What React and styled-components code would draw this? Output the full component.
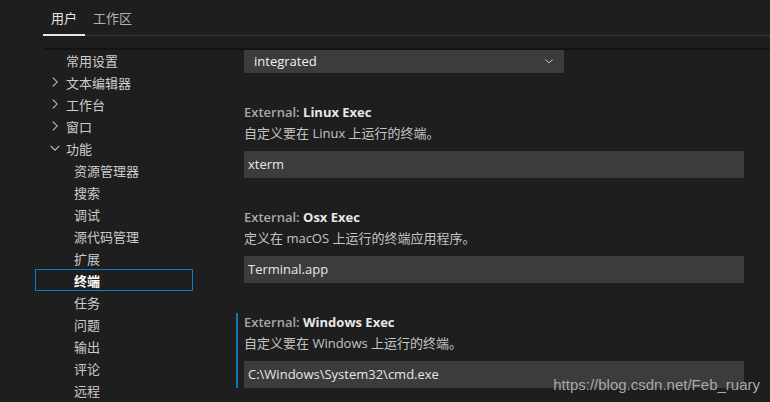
import styled, { createGlobalStyle } from 'styled-components'

const Global = createGlobalStyle`
    html, body {
        margin: 0;
        padding: 0;
        background: #1e1e1e;
    }
    * {
        box-sizing: border-box;
    }
`

const Page = styled.div`
    width: 770px;
    height: 402px;
    overflow: hidden;
    position: relative;
    background: #1e1e1e;
    color: #cccccc;
    font-family: "Open Sans", "Noto Sans CJK SC", sans-serif;
    font-size: 13px;
`

const TabBar = styled.div`
    display: flex;
    height: 36px;
    margin-left: 43px;
    border-bottom: 1px solid #3a3a3a;
`

const Tab = styled.div`
    padding: 10px 8px 0;
    height: 36px;
    line-height: 16px;
    color: ${({ $active }) => ($active ? '#e7e7e7' : '#b4b4b4')};
    border-bottom: 2px solid ${({ $active }) => ($active ? '#e7e7e7' : 'transparent')};
    margin-bottom: -1px;
`

const Shadow = styled.div`
    height: 14px;
    margin-left: 43px;
    border-bottom: 2px solid #141414;
`

const Body = styled.div`
    display: flex;
    padding-left: 35px;
    margin-top: -1px;
`

const Tree = styled.div`
    width: 158px;
    flex-shrink: 0;
`

const TreeRow = styled.div`
    display: flex;
    align-items: center;
    height: 22px;
    padding-left: ${({ $level }) => ($level === 2 ? 38 : 12)}px;
    border: 1px solid ${({ $selected }) => ($selected ? '#0a7fd0' : 'transparent')};
    color: ${({ $selected }) => ($selected ? '#ffffff' : '#cccccc')};
    font-weight: ${({ $selected }) => ($selected ? 700 : 400)};
    white-space: nowrap;
`

const Twistie = styled.span`
    width: 18px;
    display: flex;
    align-items: center;
    svg {
        width: 14px;
        height: 14px;
    }
`

const Settings = styled.div`
    margin-left: 43px;
    width: 508px;
    padding-top: 1px;
`

const SelectBox = styled.div`
    width: 320px;
    height: 23px;
    margin-left: 8px;
    background: #3c3c3c;
    display: flex;
    align-items: center;
    justify-content: space-between;
    padding: 0 9px 1px 10px;
    color: #f0f0f0;
    svg {
        width: 12px;
        height: 12px;
    }
`

const Item = styled.div`
    margin-top: 32px;
    padding-left: 6px;
    border-left: 2px solid ${({ $focused }) => ($focused ? '#0c7aab' : 'transparent')};
`

const Title = styled.div`
    line-height: 18px;
    margin-top: -2px;
    font-weight: 700;
    color: #e8e8e8;
    span {
        color: #a8a8a8;
        font-weight: 600;
    }
`

const Desc = styled.div`
    line-height: 18px;
    margin-top: 3px;
    color: #c4c4c4;
`

const Input = styled.div`
    margin-top: 9px;
    height: 27px;
    width: 500px;
    background: #3c3c3c;
    display: flex;
    align-items: center;
    padding: 0 4px 1px;
    color: #e6e6e6;
`

const Watermark = styled.div`
    position: absolute;
    right: 10px;
    bottom: 9px;
    font-family: "Liberation Sans", Arial, sans-serif;
    font-size: 15px;
    color: #a9a9a9;
`

const Chevron = ({ open }) => (
    <svg viewBox="0 0 16 16" fill="none" stroke="#c5c5c5" strokeWidth="1.2">
        {open ? <path d="M3 5.5 8 10.5l5-5" /> : <path d="M5.5 3 10.5 8l-5 5" />}
    </svg>
)

const treeItems = [
    { label: '常用设置', level: 1 },
    { label: '文本编辑器', level: 1, twistie: 'closed' },
    { label: '工作台', level: 1, twistie: 'closed' },
    { label: '窗口', level: 1, twistie: 'closed' },
    { label: '功能', level: 1, twistie: 'open' },
    { label: '资源管理器', level: 2 },
    { label: '搜索', level: 2 },
    { label: '调试', level: 2 },
    { label: '源代码管理', level: 2 },
    { label: '扩展', level: 2 },
    { label: '终端', level: 2, selected: true },
    { label: '任务', level: 2 },
    { label: '问题', level: 2 },
    { label: '输出', level: 2 },
    { label: '评论', level: 2 },
    { label: '远程', level: 2 },
]

const settings = [
    { name: 'Linux Exec', desc: '自定义要在 Linux 上运行的终端。', value: 'xterm' },
    { name: 'Osx Exec', desc: '定义在 macOS 上运行的终端应用程序。', value: 'Terminal.app' },
    { name: 'Windows Exec', desc: '自定义要在 Windows 上运行的终端。', value: 'C:\\Windows\\System32\\cmd.exe', focused: true },
]

const App = () => {
    return (
        <Page>
            <Global />
            <TabBar>
                <Tab $active>用户</Tab>
                <Tab>工作区</Tab>
            </TabBar>
            <Shadow />
            <Body>
                <Tree>
                    {treeItems.map((item) => (
                        <TreeRow key={item.label} $level={item.level} $selected={item.selected}>
                            {item.level === 1 && (
                                <Twistie>{item.twistie && <Chevron open={item.twistie === 'open'} />}</Twistie>
                            )}
                            {item.label}
                        </TreeRow>
                    ))}
                </Tree>
                <Settings>
                    <SelectBox>
                        integrated
                        <svg viewBox="0 0 16 16" fill="none" stroke="#c5c5c5" strokeWidth="1.3">
                            <path d="M3 6l5 4.5L13 6" />
                        </svg>
                    </SelectBox>
                    {settings.map((s) => (
                        <Item key={s.name} $focused={s.focused}>
                            <Title>
                                <span>External: </span>
                                {s.name}
                            </Title>
                            <Desc>{s.desc}</Desc>
                            <Input>{s.value}</Input>
                        </Item>
                    ))}
                </Settings>
            </Body>
            <Watermark>https://blog.csdn.net/Feb_ruary</Watermark>
        </Page>
    )
}

export default App
